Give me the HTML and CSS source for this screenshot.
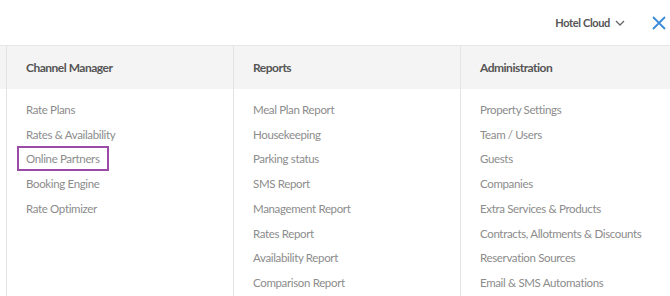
FILE: index.html
```html
<!DOCTYPE html>
<html lang="en">
<head>
  <meta charset="UTF-8">
  <title>Menu</title>
  <link rel="stylesheet" href="styles.css">
</head>
<body>

<!-- Top bar -->
<div class="topbar">
  <button class="hotel-btn">Hotel Cloud
    <svg width="10" height="6" viewBox="0 0 10 6"><path d="M1 1l4 4 4-4" fill="none" stroke="#666" stroke-width="1.3"/></svg>
  </button>
  <button class="close-btn">
    <svg width="14" height="14" viewBox="0 0 14 14"><path d="M1 1l12 12M13 1L1 13" stroke="#3b8ad9" stroke-width="1.8"/></svg>
  </button>
</div>

<!-- Menu headers -->
<div class="menu-row menu-head">
  <div class="col">Channel Manager</div>
  <div class="col">Reports</div>
  <div class="col">Administration</div>
</div>

<!-- Menu lists -->
<div class="menu-row menu-body">
  <ul class="col">
    <li>Rate Plans</li>
    <li>Rates &amp; Availability</li>
    <li><span class="active">Online Partners</span></li>
    <li>Booking Engine</li>
    <li>Rate Optimizer</li>
  </ul>
  <ul class="col">
    <li>Meal Plan Report</li>
    <li>Housekeeping</li>
    <li>Parking status</li>
    <li>SMS Report</li>
    <li>Management Report</li>
    <li>Rates Report</li>
    <li>Availability Report</li>
    <li>Comparison Report</li>
  </ul>
  <ul class="col">
    <li>Property Settings</li>
    <li>Team / Users</li>
    <li>Guests</li>
    <li>Companies</li>
    <li>Extra Services &amp; Products</li>
    <li>Contracts, Allotments &amp; Discounts</li>
    <li>Reservation Sources</li>
    <li>Email &amp; SMS Automations</li>
  </ul>
</div>

</body>
</html>
```

FILE: styles.css
```css
/* Global */
body {
  margin: 0;
  font-family: Lato, "Open Sans", sans-serif;
  background-color: #ffffff;
  color: #555555;
  overflow: hidden;
}

/* Top bar */
.topbar {
  height: 45px;
  border-bottom: 1px solid #e6e6e6;
  display: flex;
  justify-content: flex-end;
  align-items: center;
  padding-right: 3px;
}

.hotel-btn {
  background: none;
  border: none;
  font-family: inherit;
  font-size: 11px;
  font-weight: 700;
  letter-spacing: -0.35px;
  color: #555555;
  display: flex;
  align-items: center;
  gap: 5px;
  padding: 0;
  margin-right: 27px;
}

.close-btn {
  background: none;
  border: none;
  padding: 0;
  width: 14px;
  height: 14px;
  margin-right: 1px;
}

/* Menu grid */
.menu-row {
  display: grid;
  grid-template-columns: 227px 227px 1fr;
  padding-left: 6px;
}

.menu-row .col {
  border-left: 1px solid #e4e4e4;
  padding-left: 19px;
  margin: 0;
}

.menu-head {
  background-color: #f4f4f4;
  height: 43px;
  align-items: center;
}

.menu-head .col {
  height: 43px;
  line-height: 43px;
  font-size: 12px;
  font-weight: 700;
  letter-spacing: -0.5px;
  color: #555555;
}

.menu-body .col {
  list-style: none;
  padding-top: 9px;
  padding-bottom: 20px;
}

.menu-body li {
  font-size: 11.5px;
  letter-spacing: -0.35px;
  color: #8c8c8c;
  line-height: 24.7px;
}

.active {
  outline: 2px solid #9b4aa8;
  padding: 4px 7px 4px 7px;
  margin-left: -7px;
}
```
